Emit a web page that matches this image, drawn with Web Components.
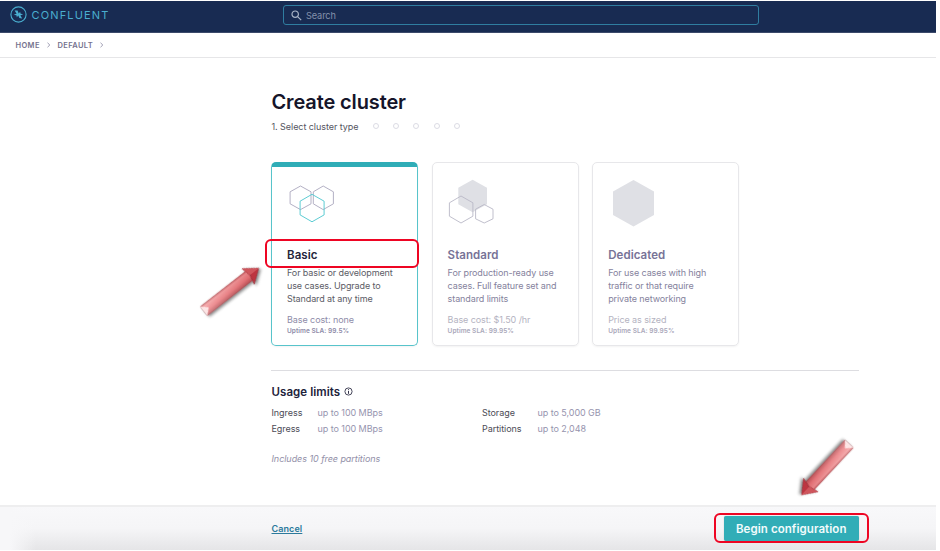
<!DOCTYPE html>
<html lang="en"><head><meta charset="utf-8"><title>Create cluster</title>
<style>
body{margin:0;background:#fff;font-family:Inter,"Liberation Sans",sans-serif;overflow:hidden}
</style></head><body>
<cluster-app></cluster-app>
<script>
function define(name, html, setup){
  customElements.define(name, class extends HTMLElement{
    constructor(){super();this.attachShadow({mode:'open'}).innerHTML=html;}
    connectedCallback(){if(setup)setup(this,this.shadowRoot);}
  });
}
define('top-bar',`<style>
:host{display:flex;box-sizing:border-box;height:32px;margin-top:1px;background:#182b52;border-bottom:1px solid #3c4a6b;color:#4aaecf}
.brand{display:flex;width:283px;height:27px;align-items:center;padding-left:10px;box-sizing:border-box;gap:4.5px;font-size:11px;letter-spacing:1.15px;line-height:14px}
.search{display:flex;box-sizing:border-box;width:476px;height:20px;margin-top:4px;border:1px solid #2f7da0;border-radius:3px;align-items:center;padding-left:7px;gap:4px;font-size:9.2px;letter-spacing:-.12px;color:#8391ab}
svg{flex:none}
</style><div class="brand"><svg width="17" height="17" viewBox="0 0 17 17"><circle cx="8.5" cy="8.5" r="7.6" fill="none" stroke="#4aaecf" stroke-width="1.1"/><path d="M4.6 4.4 7.6 4.6 8.7 7.6 10.2 5.8 10.4 7.6 13.2 8.5 10.4 9.2 12.2 12.6 9.4 12 8.3 9.4 6.8 11.2 6.6 9.4 3.8 8.5 6.6 7.8Z" fill="#4aaecf"/></svg><span>CONFLUENT</span></div>
<div class="search"><svg width="11" height="11" viewBox="0 0 11 11" fill="none" stroke="#a9b4c6" stroke-width="1.2"><circle cx="4.2" cy="4.2" r="3.2"/><path d="m6.6 6.6 3.6 3.6"/></svg><span>Search</span></div>`);
define('bread-crumbs',`<style>
:host{display:flex;box-sizing:border-box;height:25px;border-bottom:1px solid #e6e6e8;align-items:center;padding-left:15.5px;font-size:7.5px;font-weight:600;letter-spacing:.38px;color:#74728e;gap:6.8px}
svg{display:block}
</style><span>HOME</span><svg width="4" height="6" fill="none" stroke="#9c9bb0"><path d="m.5.8 2.3 2.2L.5 5.2"/></svg><span>DEFAULT</span><svg width="4" height="6" fill="none" stroke="#9c9bb0"><path d="m.5.8 2.3 2.2L.5 5.2"/></svg>`);
define('step-header',`<style>
:host{display:block}h1{margin:0;font-size:20px;line-height:26px;font-weight:600;color:#15152a;letter-spacing:-.13px}
.row{display:flex;align-items:center;margin-top:4px;height:14px;font-size:9px;color:#55555f;letter-spacing:-.06px}
.dots{display:flex;gap:14.3px;margin-left:14.5px}i{width:4px;height:4px;border:1px solid #dcdce4;border-radius:50%}
</style><h1>Create cluster</h1><div class="row"><span>1. Select cluster type</span><span class="dots"><i></i><i></i><i></i><i></i><i></i></span></div>`);
define('cluster-card',`<style>
:host{display:flex;flex-direction:column;box-sizing:border-box;width:147px;height:184px;border:1px solid #e7e7ea;border-radius:5px;padding:15px 0 0 15px;box-shadow:0 1px 2px #0000000d;color:#85829d}
:host([selected]){border-color:#58c4cb;border-top:5px solid #2fadb7;padding-top:11px;color:#5c5c66}
.icon{height:68px}
h2{margin:0;font-size:11.5px;line-height:18px;font-weight:600;color:#777397;letter-spacing:.06px}
:host([selected]) h2{color:#24243a}
p{margin:1.5px 0 0;font-size:9px;line-height:13.4px;letter-spacing:-.1px;white-space:pre}
.cost{margin-top:8px;font-size:9px;line-height:12px;letter-spacing:-.08px;color:#b4b3c1}
.sla{margin-top:.5px;font-size:6.5px;line-height:11px;font-weight:600;letter-spacing:.05px;color:#aaa8ba}
:host([selected]) .cost,:host([selected]) .sla{color:#8e8ba8}
</style><div class="icon"><slot name="icon"></slot></div><h2></h2><p><slot></slot></p><div class="cost"></div><div class="sla"></div>`,(h,r)=>{
for(const [q,a] of [['h2','name'],['.cost','cost'],['.sla','sla']])r.querySelector(q).textContent=h.getAttribute(a);});
define('usage-limits',`<style>
:host{display:block;border-top:1px solid #dddde1;color:#4b4b56;font-size:9px;letter-spacing:-.06px}
h3{display:flex;align-items:center;gap:3.5px;margin:13px 0 0;font-size:11.5px;line-height:16px;font-weight:600;letter-spacing:.06px;color:#22223b}
.grid{display:grid;grid-template-columns:46px 164.5px 55.5px 1fr;grid-auto-rows:16px;line-height:16px;margin-top:5px}
.v{color:#9694ae}em{display:block;margin-top:14px;line-height:16px;color:#9290a8;letter-spacing:-.05px}
</style><h3><span>Usage limits</span><svg width="9" height="9" fill="none" stroke="#333349" style="margin-top:-1px"><circle cx="4.5" cy="4.5" r="3.6" stroke-width=".9"/><path d="M4.5 4v2.8M4.5 2.2v1"/></svg></h3>
<div class="grid"><span>Ingress</span><span class="v">up to 100 MBps</span><span>Storage</span><span class="v">up to 5,000 GB</span><span>Egress</span><span class="v">up to 100 MBps</span><span>Partitions</span><span class="v">up to 2,048</span></div><em>Includes 10 free partitions</em>`);
define('action-bar',`<style>
:host{display:flex;box-sizing:border-box;height:45px;border-top:2px solid #eeeeef;background:linear-gradient(90deg,#f7f7f9 10px,#f7f7f900 36px),linear-gradient(#f8f8fa,#f5f5f7 50%,#e5e5e7);padding:9px 77px 0 271.5px;justify-content:space-between;align-items:flex-start}
a{font-size:9px;line-height:25px;font-weight:600;letter-spacing:.1px;color:#2c7a9c;text-decoration:underline}
button{box-sizing:border-box;width:135.5px;height:25px;border:0;border-radius:2px;background:#31adb7;color:#f1fbfc;font:600 11.5px/25px Inter,sans-serif;letter-spacing:.07px;padding:1px 0 0;box-shadow:0 0 1px #7779}
</style><a>Cancel</a><button>Begin configuration</button>`);
define('call-out',`<style>:host{display:block;position:absolute;box-sizing:border-box;border:2px solid #ee0523;border-radius:6px}</style>`);
define('pointer-arrow',`<style>:host{display:block;position:absolute}svg{display:block;overflow:visible;filter:drop-shadow(1px 2px 1.5px #0007)}</style>
<svg width="80" height="20"><defs><linearGradient id="g" x2="0" y2="1"><stop stop-color="#c96468"/><stop offset=".18" stop-color="#f49b9d"/><stop offset=".6" stop-color="#ec7e82"/><stop offset="1" stop-color="#b8555a"/></linearGradient><linearGradient id="s"><stop stop-color="#fff" stop-opacity=".2"/><stop offset="1" stop-color="#b0202a" stop-opacity=".2"/></linearGradient></defs>
<path d="M0 4.3H58V15.7H0Z" fill="url(#g)" stroke="#a9494d" stroke-width=".5"/><path d="M0 4.3H58V15.7H0Z" fill="url(#s)"/><path d="M0 4.5 6 10 0 15.5Z" fill="#fde5e5"/><path d="M56 0 69.5 10 56 20 58.5 10Z" fill="#bd3540" stroke="#8e2730" stroke-width=".5"/><path d="M56 0 69.5 10 58.5 10Z" fill="#cf555c"/></svg>`);
define('cluster-app',`<style>
:host{display:flex;flex-direction:column;position:relative;width:936px;height:550px}
main{flex:1;padding:31px 0 0 271px;width:587.5px}
step-header,usage-limits{padding-left:.5px}
.cards{display:flex;gap:13.6px;margin-top:29px}svg{display:block}
usage-limits{margin-top:24px}
.c1{left:265px;top:239px;width:154px;height:29px}.c2{left:714px;top:513px;width:155px;height:30px}
.a1{left:204px;top:301px;transform-origin:0 10px;transform:rotate(-38deg)}
.a2{left:849px;top:434px;transform-origin:0 10px;transform:rotate(133deg)}
</style><top-bar></top-bar><bread-crumbs></bread-crumbs>
<main><step-header></step-header><div class="cards">
<cluster-card selected name="Basic" cost="Base cost: none" sla="Uptime SLA: 99.5%"><svg slot="icon" width="60" height="50" fill="none" stroke="#aaa7bd" stroke-width=".9"><path d="M13.5 8 24 13.8v12L13.5 31.6 3.1 25.8v-12ZM36.2 8 46.4 13.8v12L36.2 31.6 26.3 25.8v-12Z"/><path d="M25 16.3 37.1 23.2v13.7L25 43.8 13.1 36.9V23.2Z" stroke="#4bc6ce"/></svg>For basic or development
use cases. Upgrade to
Standard at any time</cluster-card>
<cluster-card name="Standard" cost="Base cost: $1.50 /hr" sla="Uptime SLA: 99.95%"><svg slot="icon" width="60" height="50" fill="none" stroke="#b9b8c6" stroke-width=".9"><path d="M24.6 1.8 39 9.8v16.5L24.6 34.3 10.3 26.3V9.8Z" fill="#dfe0e5" stroke="none"/><path d="M13 18 24.9 24.8v13.4L13 45 1.4 38.2V24.8ZM36.2 26.5 45 31.2v9.6L36.2 45 27.6 40.8V31.2Z"/></svg>For production-ready use
cases. Full feature set and
standard limits</cluster-card>
<cluster-card name="Dedicated" cost="Price as sized" sla="Uptime SLA: 99.95%"><svg slot="icon" width="60" height="50"><path d="M25.5 2 46 13.5V37L25.5 48.5 5 37V13.5Z" fill="#dfe0e5"/></svg>For use cases with high
traffic or that require
private networking</cluster-card></div>
<usage-limits></usage-limits></main><action-bar></action-bar>
<call-out class="c1"></call-out><call-out class="c2"></call-out><pointer-arrow class="a1"></pointer-arrow><pointer-arrow class="a2"></pointer-arrow>`);
</script></body></html>
